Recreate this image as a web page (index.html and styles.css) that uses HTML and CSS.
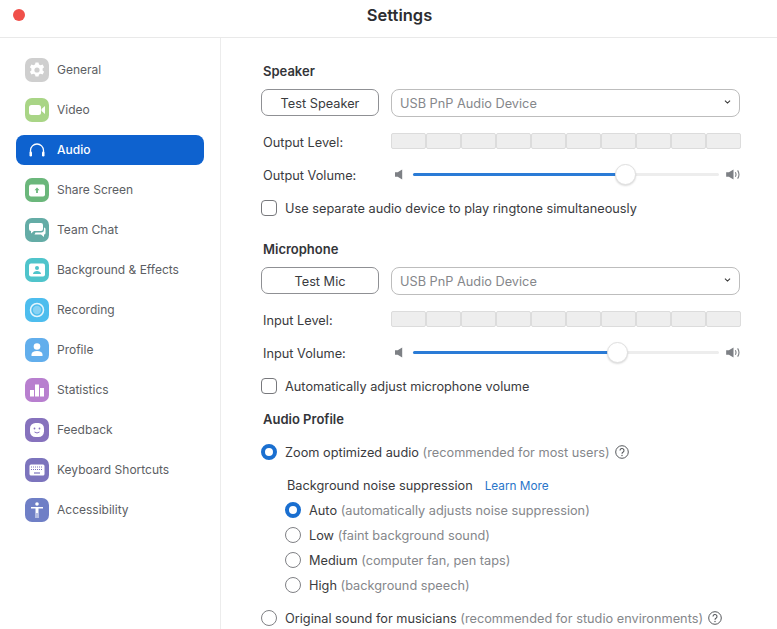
FILE: index.html
```html
<!DOCTYPE html>
<html lang="en">
<head>
<meta charset="utf-8">
<title>Settings</title>
<link rel="stylesheet" href="styles.css">
</head>
<body>
<svg class="defs" width="0" height="0" aria-hidden="true">
  <symbol id="spk-lo" viewBox="0 0 10 12"><path d="M0 3.5h3L8 0.500v11L3 8.500H0z" fill="#7d8085"/></symbol>
  <symbol id="spk-hi" viewBox="0 0 16 12"><path d="M0 3.500h3L8 0.500v11L3 8.500H0z" fill="#7d8085"/><path d="M10 3.500q1.500 2.500 0 5M12.500 1.500q3 4.500 0 9" fill="none" stroke="#7d8085" stroke-width="1.200"/></symbol>
  <symbol id="help" viewBox="0 0 14 14"><circle cx="7" cy="7" r="6.300" fill="none" stroke="#55585c" stroke-width="1"/><path d="M5 5.500a2 2 0 1 1 3 1.700c-.7.400-1 .8-1 1.500" fill="none" stroke="#55585c" stroke-width="1.100"/><circle cx="7" cy="10.500" r=".7" fill="#55585c"/></symbol>
</svg>
<header class="titlebar">
  <span class="close-dot"></span>
  <h1 class="title">Settings</h1>
</header>
<div class="layout">
  <nav class="sidebar">
    <div class="nav-item"><span class="icon ic-general"><svg viewBox="0 0 24 24"><path d="M10.500 4.500h3l.5 2 1.600.8 2-.7 1.500 2.600-1.500 1.400v1.800l1.500 1.400-1.500 2.600-2-.7-1.600.8-.5 2h-3l-.5-2-1.600-.8-2 .7-1.500-2.600 1.500-1.400v-1.800L4.900 9.200l1.500-2.600 2 .7 1.600-.8z" fill="#fff"/><circle cx="12" cy="12" r="2.600" fill="#cfcfcf"/></svg></span>General</div>
    <div class="nav-item"><span class="icon ic-video"><svg viewBox="0 0 24 24"><rect x="4" y="7" width="12" height="10" rx="2.500" fill="#fff"/><path d="M16.500 11l3.500-3v8l-3.500-3z" fill="#fff"/></svg></span>Video</div>
    <div class="nav-item active"><span class="icon"><svg viewBox="0 0 24 24"><path d="M5.500 15v-2.500a6.500 6.500 0 0 1 13 0V15" fill="none" stroke="#fff" stroke-width="1.300"/><rect x="4.500" y="13.500" width="2.500" height="5" rx="1.200" fill="#fff"/><rect x="17" y="13.500" width="2.500" height="5" rx="1.200" fill="#fff"/></svg></span>Audio</div>
    <div class="nav-item"><span class="icon ic-share"><svg viewBox="0 0 24 24"><rect x="4" y="6.500" width="16" height="12" rx="2" fill="#fff"/><path d="M12 9.500l2.500 2.700h-1.600v2.800h-1.800v-2.800H9.500z" fill="#6bb77b"/></svg></span>Share Screen</div>
    <div class="nav-item"><span class="icon ic-chat"><svg viewBox="0 0 24 24"><path d="M6 5h10a2 2 0 0 1 2 2v4a2 2 0 0 1-2 2H9l-3 2.500V13a2 2 0 0 1-2-2V7a2 2 0 0 1 2-2z" fill="#fff"/><path d="M19 9.500a1.500 1.500 0 0 1 1.500 1.500v4a1.500 1.500 0 0 1-1.500 1.500v2.500l-3-2.500H9.500l1-2H16a3 3 0 0 0 3-3z" fill="#fff"/></svg></span>Team Chat</div>
    <div class="nav-item"><span class="icon ic-bg"><svg viewBox="0 0 24 24"><rect x="4" y="5.500" width="16" height="13" rx="2" fill="#fff"/><circle cx="12" cy="10" r="2" fill="#4fc4cb"/><path d="M8 16c0-4 8-4 8 0z" fill="#4fc4cb"/></svg></span>Background &amp; Effects</div>
    <div class="nav-item"><span class="icon ic-rec"><svg viewBox="0 0 24 24"><circle cx="12" cy="12" r="6.500" fill="none" stroke="#fff" stroke-width="1.500" opacity=".85"/><circle cx="12" cy="12" r="4.200" fill="#86d2f4"/></svg></span>Recording</div>
    <div class="nav-item"><span class="icon ic-profile"><svg viewBox="0 0 24 24"><circle cx="12" cy="8.500" r="3.300" fill="#fff"/><path d="M6.500 18v-1.500c0-2 2-3.500 5.500-3.500s5.500 1.500 5.500 3.500V18z" fill="#fff"/></svg></span>Profile</div>
    <div class="nav-item"><span class="icon ic-stats"><svg viewBox="0 0 24 24"><rect x="5" y="12" width="4" height="6.500" fill="#fff"/><rect x="10" y="6.500" width="4" height="12" fill="#fff"/><rect x="15" y="10" width="4" height="8.500" fill="#fff"/></svg></span>Statistics</div>
    <div class="nav-item"><span class="icon ic-feedback"><svg viewBox="0 0 24 24"><rect x="5" y="5" width="14" height="14" rx="5.500" fill="#fff"/><circle cx="9.500" cy="10.500" r=".9" fill="#8672bd"/><circle cx="14.500" cy="10.500" r=".9" fill="#8672bd"/><path d="M9.500 14q2.500 2 5 0" fill="none" stroke="#8672bd" stroke-width="1"/></svg></span>Feedback</div>
    <div class="nav-item"><span class="icon ic-keys"><svg viewBox="0 0 24 24"><rect x="4.500" y="6.500" width="15" height="11" rx="1.500" fill="#fff"/><path d="M6 9h12M6 11.500h12" stroke="#7c74bd" stroke-width="1" stroke-dasharray="1 1"/><path d="M9 15h6" stroke="#7c74bd" stroke-width="1.200"/></svg></span>Keyboard Shortcuts</div>
    <div class="nav-item"><span class="icon ic-access"><svg viewBox="0 0 24 24"><circle cx="12" cy="6" r="1.800" fill="#fff"/><path d="M6 9h12v1.500h-4.500V20H12.500v-5h-1v5h-1v-9.500H6z" fill="#fff"/></svg></span>Accessibility</div>
  </nav>
  <main class="content">
    <h2 class="heading h-speaker">Speaker</h2>
    <div class="device-row">
      <button class="test-btn">Test Speaker</button>
      <div class="select">USB PnP Audio Device<svg class="chev" viewBox="0 0 8 5"><path d="M.8.8L4 3.800 7.200.8" fill="none" stroke="#333" stroke-width="1.300"/></svg></div>
    </div>
    <div class="row level-row">
      <span class="label">Output Level:</span>
      <div class="meter"><i></i><i></i><i></i><i></i><i></i><i></i><i></i><i></i><i></i><i></i></div>
    </div>
    <div class="row volume-row">
      <span class="label">Output Volume:</span>
      <div class="volume">
        <svg class="spk-lo"><use href="#spk-lo"/></svg>
        <div class="track"><div class="fill fill-out"></div><span class="thumb"></span></div>
        <svg class="spk-hi"><use href="#spk-hi"/></svg>
      </div>
    </div>
    <label class="check-row"><span class="checkbox"></span>Use separate audio device to play ringtone simultaneously</label>

    <h2 class="heading h-mic">Microphone</h2>
    <div class="device-row">
      <button class="test-btn">Test Mic</button>
      <div class="select">USB PnP Audio Device<svg class="chev" viewBox="0 0 8 5"><path d="M.8.8L4 3.800 7.200.8" fill="none" stroke="#333" stroke-width="1.300"/></svg></div>
    </div>
    <div class="row level-row">
      <span class="label">Input Level:</span>
      <div class="meter"><i></i><i></i><i></i><i></i><i></i><i></i><i></i><i></i><i></i><i></i></div>
    </div>
    <div class="row volume-row">
      <span class="label">Input Volume:</span>
      <div class="volume">
        <svg class="spk-lo"><use href="#spk-lo"/></svg>
        <div class="track"><div class="fill fill-in"></div><span class="thumb"></span></div>
        <svg class="spk-hi"><use href="#spk-hi"/></svg>
      </div>
    </div>
    <label class="check-row"><span class="checkbox"></span>Automatically adjust microphone volume</label>

    <h2 class="heading h-profile">Audio Profile</h2>
    <div class="radio-row top"><span class="radio on"></span>Zoom optimized audio <span class="muted">(recommended for most users)</span><svg class="help"><use href="#help"/></svg></div>
    <div class="noise-title">Background noise suppression<a class="link">Learn More</a></div>
    <div class="radio-row sub"><span class="radio on"></span>Auto <span class="muted">(automatically adjusts noise suppression)</span></div>
    <div class="radio-row sub"><span class="radio"></span>Low <span class="muted">(faint background sound)</span></div>
    <div class="radio-row sub"><span class="radio"></span>Medium <span class="muted">(computer fan, pen taps)</span></div>
    <div class="radio-row sub"><span class="radio"></span>High <span class="muted">(background speech)</span></div>
    <div class="radio-row orig"><span class="radio"></span>Original sound for musicians <span class="muted">(recommended for studio environments)</span><svg class="help"><use href="#help"/></svg></div>
  </main>
</div>
</body>
</html>
```
FILE: styles.css
```css
* { box-sizing: border-box; }
html, body { margin: 0; height: 100%; }
body {
  width: 777px;
  height: 629px;
  overflow: hidden;
  background: #fff;
  color: #3a3b3e;
  font-family: Inter, "Liberation Sans", sans-serif;
  font-size: 12.75px;
}
.defs { position: absolute; }
.titlebar {
  height: 38px;
  border-bottom: 1px solid #e9e9e9;
  display: flex;
  align-items: center;
  justify-content: center;
  padding-left: 22px;
  position: relative;
}
.close-dot {
  position: absolute;
  left: 13px;
  top: 9px;
  width: 12px;
  height: 12px;
  border-radius: 50%;
  background: #f0504a;
}
.title { margin: 0 0 8px; font-size: 16.500px; font-weight: 600; color: #2c2d30; }
.layout { display: flex; height: 591px; }
.sidebar {
  width: 221px;
  flex: none;
  border-right: 1px solid #ececec;
  padding: 17px 16px 0;
  display: flex;
  flex-direction: column;
  gap: 10px;
}
.nav-item {
  width: 188px;
  height: 30px;
  display: flex;
  align-items: center;
  padding: 0 0 2px 9px;
  gap: 8px;
  color: #5c5e63;
  border-radius: 8px;
  font-size: 12px;
}
.nav-item.active { background: #0e62cf; color: #fff; font-weight: 500; }
.icon { width: 24px; height: 24px; border-radius: 7px; flex: none; display: block; margin-bottom: -2px; }
.icon svg { display: block; width: 24px; height: 24px; }
.ic-general { background: #cfcfcf; }
.ic-video { background: #a9d586; }
.ic-share { background: #6bb77b; }
.ic-chat { background: #64aca6; }
.ic-bg { background: #4fc4cb; }
.ic-rec { background: #4dbdee; }
.ic-profile { background: #62aeec; }
.ic-stats { background: #b87fcf; }
.ic-feedback { background: #8672bd; }
.ic-keys { background: #7c74bd; }
.ic-access { background: #6f7fc6; }

.content { flex: 1; padding: 0 0 0 42px; position: relative; }
.heading { margin: 0; font-size: 13px; font-weight: 600; color: #333438; height: 16px; line-height: 14px; }
.h-speaker { margin-top: 26px; }
.h-mic { margin-top: 25px; }
.h-profile { margin-top: 17px; }
.device-row { display: flex; margin: 9px 0 0 -2px; gap: 12px; align-items: flex-start; }
.test-btn {
  width: 118px;
  height: 27px;
  padding: 2px 0 0;
  background: #fff;
  border: 1px solid #8f9094;
  border-radius: 7px;
  color: #3a3b3e;
  font: inherit;
}
.select {
  width: 349px;
  height: 28px;
  border: 1.500px solid #bdbdbd;
  border-radius: 8px;
  padding: 0 0 0 8px;
  display: flex;
  align-items: center;
  justify-content: space-between;
  color: #85878b;
}
.chev { width: 7px; height: 4px; margin: 0 8px 3px 0; }
.row { display: flex; align-items: center; }
.label { width: 128px; flex: none; color: #3a3b3e; padding-top: 2px; }
.level-row { margin-top: 16px; height: 16px; }
.meter { display: flex; width: 350px; height: 16px; }
.meter i {
  flex: 1;
  background: #eeeeee;
  border: 1px solid #dcdcdc;
  border-radius: 2px;
}
.volume-row { margin-top: 17px; height: 16px; }
.volume { display: flex; align-items: center; width: 350px; }
.spk-lo { width: 9px; height: 11px; margin-left: 4px; flex: none; }
.spk-hi { width: 15px; height: 11px; margin-left: 7px; flex: none; }
.track {
  width: 306px;
  margin-left: 9px;
  height: 3px;
  border-radius: 2px;
  background: #ededed;
  position: relative;
}
.fill { height: 3px; background: #2a7bd6; border-radius: 2px; }
.fill-out { width: 212px; }
.fill-in { width: 204px; }
.thumb {
  position: absolute;
  top: -9px;
  width: 21px;
  height: 21px;
  border-radius: 50%;
  background: #fff;
  border: 1px solid #e0e0e0;
  box-shadow: 0 1px 2px rgba(0,0,0,.15);
}
.fill-out + .thumb { left: 202px; }
.fill-in + .thumb { left: 194px; }
.check-row {
  display: flex;
  align-items: center;
  margin: 17px 0 0 -2px;
  height: 18px;
  gap: 8px;
}
.checkbox {
  width: 16px;
  height: 16px;
  border: 1px solid #77787c;
  border-radius: 4px;
  flex: none;
}
.radio-row { display: flex; align-items: center; white-space: pre; height: 18px; }
.radio {
  width: 16px;
  height: 16px;
  border-radius: 50%;
  border: 1px solid #808185;
  flex: none;
  margin-right: 8px;
}
.radio.on { border: 4.500px solid #1a6fd0; background: #fff; }
.muted { color: #85878b; }
.top { margin: 15px 0 0 -2px; }
.noise-title { margin: 17px 0 0 24px; height: 16px; line-height: 16px; }
.link { color: #2a75c9; margin-left: 12px; font-size: 11.800px; }
.sub { margin: 7px 0 0 22px; }
.orig { margin: 15px 0 0 -2px; }
.help { width: 14px; height: 14px; margin-left: 5px; flex: none; }
```
